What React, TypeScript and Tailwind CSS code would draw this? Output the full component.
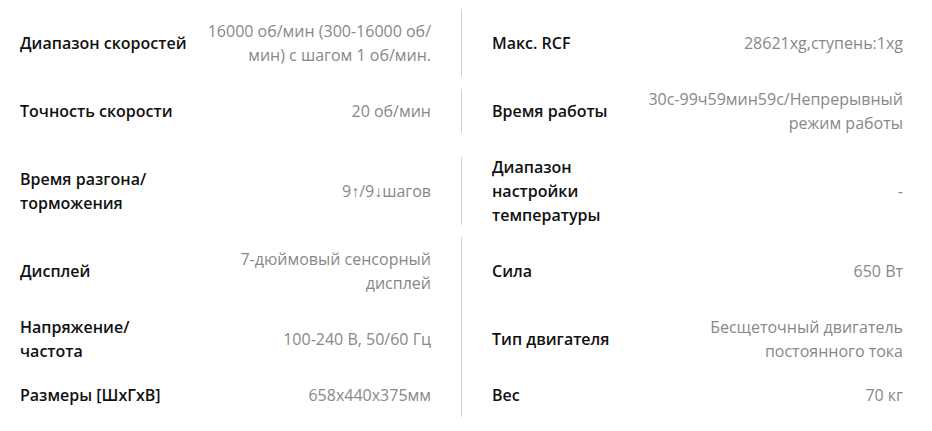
type Spec = { label: string; value: string };

const rows: [Spec, Spec][] = [
  [
    { label: "Диапазон скоростей", value: "16000 об/мин (300-16000 об/мин) с шагом 1 об/мин." },
    { label: "Макс. RCF", value: "28621xg,ступень:1xg" },
  ],
  [
    { label: "Точность скорости", value: "20 об/мин" },
    { label: "Время работы", value: "30с-99ч59мин59с/Непрерывный режим работы" },
  ],
  [
    { label: "Время разгона/ торможения", value: "9↑/9↓шагов" },
    { label: "Диапазон настройки температуры", value: "-" },
  ],
  [
    { label: "Дисплей", value: "7-дюймовый сенсорный дисплей" },
    { label: "Сила", value: "650 Вт" },
  ],
  [
    { label: "Напряжение/ частота", value: "100-240 В, 50/60 Гц" },
    { label: "Тип двигателя", value: "Бесщеточный двигатель постоянного тока" },
  ],
  [
    { label: "Размеры [ШхГхВ]", value: "658x440x375мм" },
    { label: "Вес", value: "70 кг" },
  ],
];

function Cell({ spec, labelClass }: { spec: Spec; labelClass: string }) {
  return (
    <div className="flex items-center py-[10px]">
      <div className={`${labelClass} shrink-0 font-semibold text-[#111]`}>{spec.label}</div>
      <div className="flex-1 text-right text-[#888]">{spec.value}</div>
    </div>
  );
}

export default function App() {
  return (
    <div
      className="w-[932px] bg-white pt-[9px] pb-[14px] text-[16px] leading-[24px]"
      style={{ fontFamily: '"Open Sans", "Noto Sans", sans-serif' }}
    >
      {rows.map(([left, right], i) => (
        <div key={i} className="flex items-center">
          <div className="w-[462px] shrink-0 border-r border-[#d4d4d4] pl-[20px] pr-[30px]">
            <Cell spec={left} labelClass="w-[172px]" />
          </div>
          <div className="flex-1 pl-[30px] pr-[29px]">
            <Cell spec={right} labelClass="w-[140px]" />
          </div>
        </div>
      ))}
    </div>
  );
}
